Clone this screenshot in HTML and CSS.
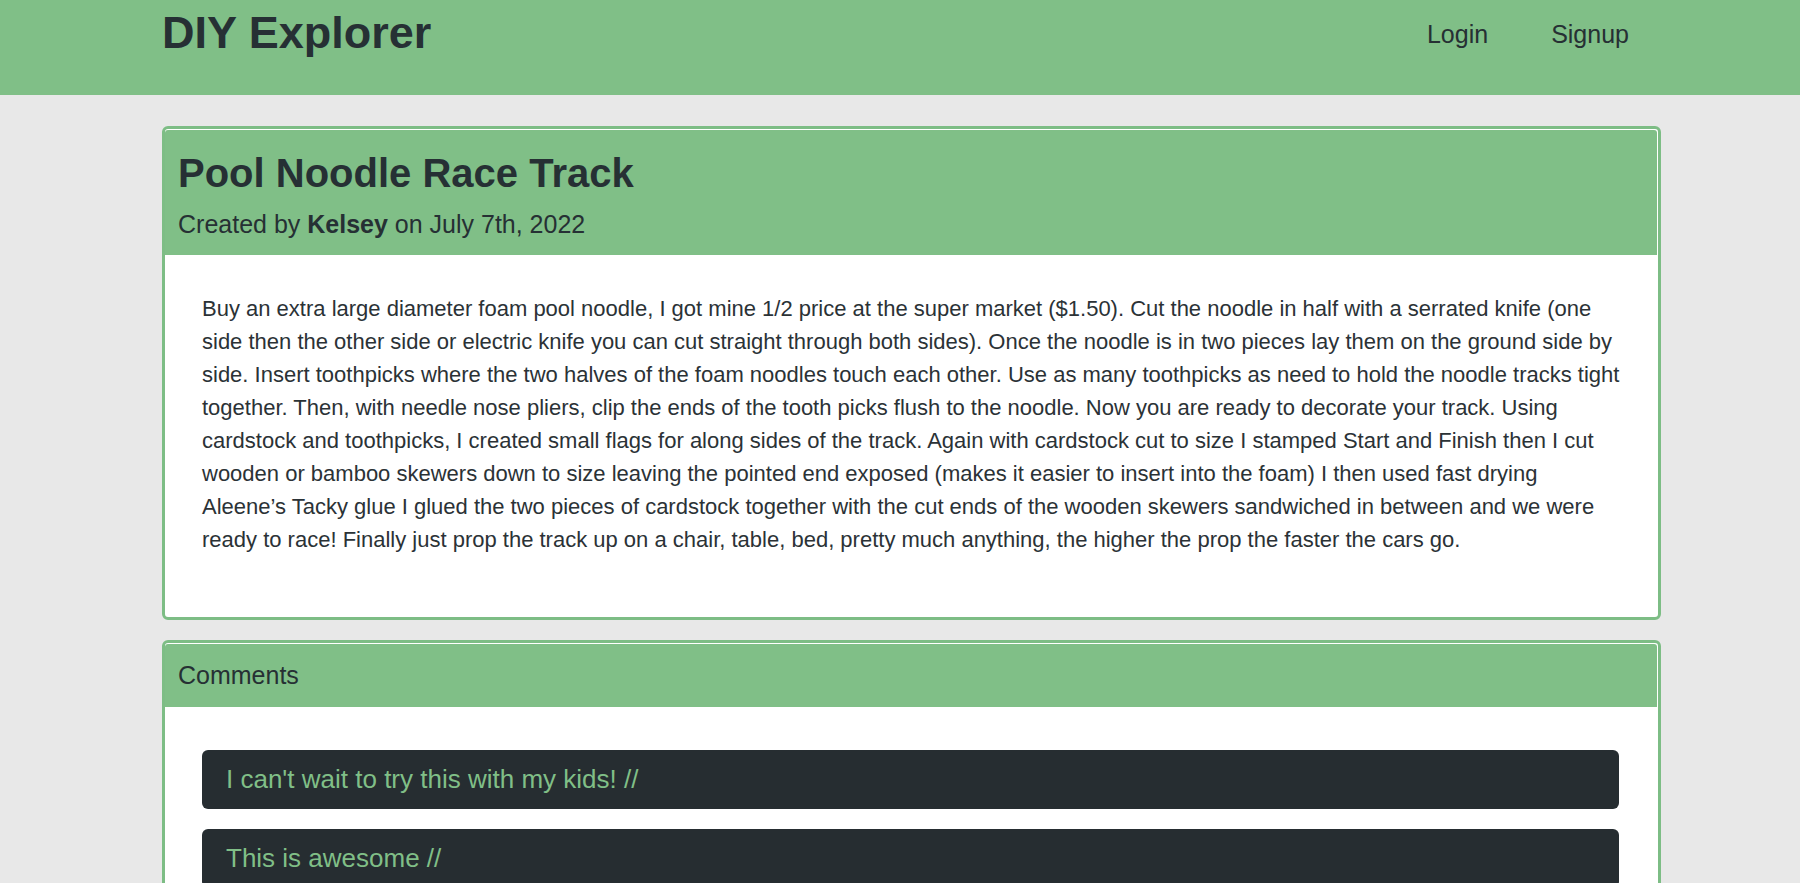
FILE: index.html
```html
<!DOCTYPE html>
<html lang="en">
<head>
<meta charset="utf-8">
<title>DIY Explorer</title>
<link rel="stylesheet" href="styles.css">
</head>
<body>
<header class="nav">
  <div class="wrap nav-inner">
    <h1 class="brand">DIY Explorer</h1>
    <nav class="links">
      <a href="#" class="link">Login</a>
      <a href="#" class="link">Signup</a>
    </nav>
  </div>
</header>
<main class="wrap">
  <section class="card">
    <div class="card-header project-header">
      <h2 class="project-title">Pool Noodle Race Track</h2>
      <p class="project-meta">Created by <strong>Kelsey</strong> on July 7th, 2022</p>
    </div>
    <div class="card-body project-body">
      <p class="project-text">Buy an extra large diameter foam pool noodle, I got mine 1/2 price at the super market ($1.50). Cut the noodle in half with a serrated knife (one side then the other side or electric knife you can cut straight through both sides). Once the noodle is in two pieces lay them on the ground side by side. Insert toothpicks where the two halves of the foam noodles touch each other. Use as many toothpicks as need to hold the noodle tracks tight together. Then, with needle nose pliers, clip the ends of the tooth picks flush to the noodle. Now you are ready to decorate your track. Using cardstock and toothpicks, I created small flags for along sides of the track. Again with cardstock cut to size I stamped Start and Finish then I cut wooden or bamboo skewers down to size leaving the pointed end exposed (makes it easier to insert into the foam) I then used fast drying Aleene’s Tacky glue I glued the two pieces of cardstock together with the cut ends of the wooden skewers sandwiched in between and we were ready to race! Finally just prop the track up on a chair, table, bed, pretty much anything, the higher the prop the faster the cars go.</p>
    </div>
  </section>
  <section class="card comments-card">
    <div class="card-header comments-header">Comments</div>
    <div class="card-body comments-body">
      <div class="comment">I can't wait to try this with my kids! //</div>
      <div class="comment">This is awesome //</div>
    </div>
  </section>
</main>
</body>
</html>
```
FILE: styles.css
```css
* { box-sizing: border-box; }
html, body { margin: 0; padding: 0; }
body {
  background: #e8e8e8;
  font-family: "Liberation Sans", Arial, sans-serif;
  color: #263034;
}
.wrap {
  width: 1499px;
  margin-left: 162px;
}
.nav {
  background: #80bf87;
  height: 95px;
}
.nav-inner {
  display: flex;
  justify-content: space-between;
  align-items: flex-start;
}
.brand {
  margin: 0;
  padding-top: 7px;
  font-size: 45px;
  line-height: 52px;
  font-weight: 700;
  color: #263034;
}
.links {
  display: flex;
  gap: 63px;
  padding-top: 19px;
  margin-right: 32px;
}
.link {
  font-size: 25px;
  line-height: 30px;
  color: #263034;
  text-decoration: none;
}
.card {
  margin-top: 31px;
  background: #fff;
  border: 3px solid #7dbd85;
  border-radius: 6px;
  overflow: hidden;
}
.card-header {
  background: #80bf87;
  margin: 1px 1px 0 0;
  border-radius: 3px 3px 0 0;
}
.project-header {
  padding: 19px 13px 13px;
}
.project-title {
  margin: 0;
  font-size: 40px;
  line-height: 48px;
  font-weight: 700;
}
.project-meta {
  margin: 9px 0 0;
  font-size: 25px;
  line-height: 36px;
}
.project-body {
  padding: 37px 38px 61px 37px;
}
.project-text {
  margin: 0;
  font-size: 22px;
  line-height: 33px;
  color: #2b3236;
}
.comments-card {
  margin-top: 20px;
  margin-bottom: 40px;
}
.comments-header {
  height: 63px;
  padding: 0 13px;
  font-size: 25px;
  line-height: 63px;
}
.comments-body {
  padding: 43px 39px 20px 37px;
  display: flex;
  flex-direction: column;
  gap: 20px;
}
.comment {
  background: #262d31;
  color: #80bf87;
  border-radius: 6px;
  padding: 14px 24px;
  font-size: 26px;
  line-height: 31px;
}
```
